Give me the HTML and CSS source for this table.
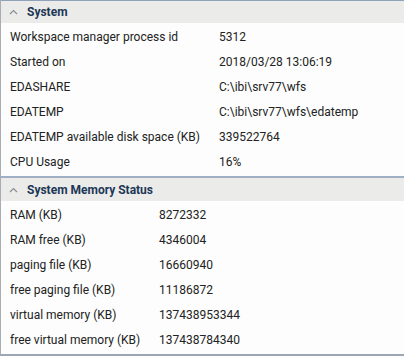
FILE: index.html
```html
<!DOCTYPE html>
<html>
<head>
<meta charset="utf-8">
<link rel="stylesheet" href="styles.css">
</head>
<body>
<div class="panel">
  <section class="sect sect-system">
    <div class="head">
      <svg class="chev" width="9" height="6" viewBox="0 0 9 6"><path d="M1 5 L4.5 1.5 L8 5" fill="none" stroke="#8a8e92" stroke-width="1.2"/></svg>
      <span class="title">System</span>
    </div>
    <div class="rows">
      <div class="k">Workspace manager process id</div><div class="v">5312</div>
      <div class="k">Started on</div><div class="v">2018/03/28 13:06:19</div>
      <div class="k">EDASHARE</div><div class="v">C:\ibi\srv77\wfs</div>
      <div class="k">EDATEMP</div><div class="v">C:\ibi\srv77\wfs\edatemp</div>
      <div class="k">EDATEMP available disk space (KB)</div><div class="v">339522764</div>
      <div class="k">CPU Usage</div><div class="v">16%</div>
    </div>
  </section>
  <section class="sect sect-mem">
    <div class="head">
      <svg class="chev" width="9" height="6" viewBox="0 0 9 6"><path d="M1 5 L4.5 1.5 L8 5" fill="none" stroke="#8a8e92" stroke-width="1.2"/></svg>
      <span class="title">System Memory Status</span>
    </div>
    <div class="rows">
      <div class="k">RAM (KB)</div><div class="v">8272332</div>
      <div class="k">RAM free (KB)</div><div class="v">4346004</div>
      <div class="k">paging file (KB)</div><div class="v">16660940</div>
      <div class="k">free paging file (KB)</div><div class="v">11186872</div>
      <div class="k">virtual memory (KB)</div><div class="v">137438953344</div>
      <div class="k">free virtual memory (KB)</div><div class="v">137438784340</div>
    </div>
  </section>
</div>
</body>
</html>
```

FILE: styles.css
```css
html, body {
  margin: 0;
  padding: 0;
  background: #fcfdfc;
}
body {
  width: 404px;
  height: 358px;
  overflow: hidden;
  font-family: Roboto, "Liberation Sans", sans-serif;
  font-size: 12px;
  color: #222;
}
.panel {
  border-left: 1px solid #a6adb4;
  border-bottom: 2px solid #9aa6b4;
  padding-bottom: 1px;
}
.sect {
  display: flex;
  flex-direction: column;
}
.head {
  display: flex;
  align-items: center;
  gap: 9px;
  height: 22px;
  padding-left: 8px;
  background: #ebecea;
  border-top: 1px solid #8fa2ba;
}
.sect-mem .head {
  border-top: 2px solid #9fb0c4;
  height: 23px;
  margin-top: 1px;
}
.chev {
  display: block;
}
.title {
  font-weight: bold;
  color: #1d3756;
  font-size: 12px;
}
.rows {
  display: grid;
  grid-auto-rows: 25px;
  align-items: center;
  padding: 1px 0 1px 9px;
}
.sect-system .rows {
  grid-template-columns: 209px 1fr;
}
.sect-mem .rows {
  grid-template-columns: 149px 1fr;
}
.k, .v {
  white-space: nowrap;
}
```
